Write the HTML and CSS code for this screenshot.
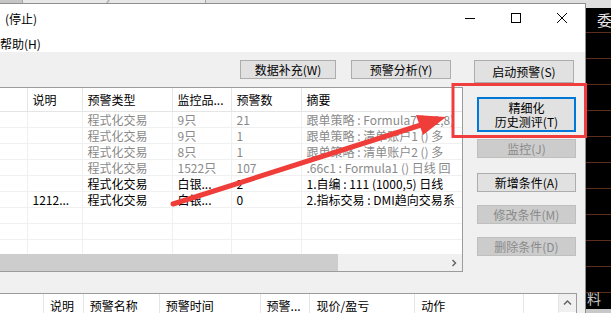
FILE: index.html
```html
<!DOCTYPE html>
<html lang="zh-CN">
<head>
    <meta charset="UTF-8">
    <title>预警系统</title>
    <link rel="stylesheet" href="styles.css">
</head>
<body>
    <div class="desktop">
        <!-- Application behind the dialog -->
        <div class="backdrop">
            <div class="bg-strip">
                <span class="bg-seg bg-seg-dark"></span>
                <span class="bg-seg bg-seg-mid"></span>
                <span class="bg-seg bg-seg-light"></span>
            </div>
            <div class="bg-body">
                <div class="bg-hidden"></div>
                <div class="quote">
                    <div class="quote-top">委</div>
                    <div class="quote-bottom">料</div>
                    <div class="quote-foot"></div>
                </div>
            </div>
        </div>

        <!-- The dialog window -->
        <div class="window">
            <div class="titlebar">
                <span class="title">(停止)</span>
                <div class="controls">
                    <span class="ctl"><svg width="12" height="12" viewBox="0 0 12 12"><path d="M1 6.5h10" stroke="#000" stroke-width="1"/></svg></span>
                    <span class="ctl"><svg width="12" height="12" viewBox="0 0 12 12"><rect x="1.5" y="1.5" width="9" height="9" fill="none" stroke="#000" stroke-width="1"/></svg></span>
                    <span class="ctl"><svg width="12" height="12" viewBox="0 0 12 12"><path d="M1 1l10 10M11 1L1 11" stroke="#000" stroke-width="1"/></svg></span>
                </div>
            </div>
            <div class="menubar"><span class="menu-item">帮助(H)</span></div>

            <div class="client">
                <div class="upper">
                    <div class="left-pane">
                        <div class="toolbar">
                            <button class="btn btn-data">数据补充(W)</button>
                            <button class="btn btn-analysis">预警分析(Y)</button>
                        </div>
                        <div class="grid-box">
                            <div class="grid-scroll">
                                <table class="grid">
                                    <colgroup>
                                        <col style="width:27px"><col style="width:55px"><col style="width:90px">
                                        <col style="width:59px"><col style="width:70px"><col style="width:200px">
                                    </colgroup>
                                    <thead>
                                        <tr><th></th><th>说明</th><th>预警类型</th><th>监控品...</th><th>预警数</th><th>摘要</th></tr>
                                    </thead>
                                    <tbody>
                                        <tr class="off"><td></td><td></td><td>程式化交易</td><td>9只</td><td>21</td><td>跟单策略 : Formula7 (1,1,8)</td></tr>
                                        <tr class="off"><td></td><td></td><td>程式化交易</td><td>9只</td><td>1</td><td>跟单策略 : 清单账户1 () 多</td></tr>
                                        <tr class="off"><td></td><td></td><td>程式化交易</td><td>8只</td><td>1</td><td>跟单策略 : 清单账户2 () 多</td></tr>
                                        <tr class="off"><td></td><td></td><td>程式化交易</td><td>1522只</td><td>107</td><td>.66c1 : Formula1 () 日线 回</td></tr>
                                        <tr><td></td><td></td><td>程式化交易</td><td>白银...</td><td>2</td><td>1.自编 : 111 (1000,5) 日线</td></tr>
                                        <tr><td></td><td>1212...</td><td>程式化交易</td><td>白银...</td><td>0</td><td>2.指标交易 : DMI趋向交易系</td></tr>
                                        <tr><td></td><td></td><td></td><td></td><td></td><td></td></tr>
                                        <tr><td></td><td></td><td></td><td></td><td></td><td></td></tr>
                                        <tr><td></td><td></td><td></td><td></td><td></td><td></td></tr>
                                    </tbody>
                                </table>
                            </div>
                            <div class="hscroll">
                                <div class="hthumb"></div>
                                <span class="scroll-btn">
                                    <svg width="8" height="8" viewBox="0 0 8 8"><path d="M2.5 1l3 3-3 3" fill="none" stroke="#606060" stroke-width="1.4"/></svg>
                                </span>
                            </div>
                        </div>
                    </div>

                    <div class="side-pane">
                        <button class="btn btn-start">启动预警(S)</button>
                        <button class="btn btn-side btn-refine">精细化<br>历史测评(T)</button>
                        <button class="btn btn-side btn-off btn-monitor">监控(J)</button>
                        <button class="btn btn-side btn-add">新增条件(A)</button>
                        <button class="btn btn-side btn-off btn-edit">修改条件(M)</button>
                        <button class="btn btn-side btn-off btn-delete">删除条件(D)</button>
                    </div>
                </div>

                <div class="lower">
                    <div class="lower-head">
                        <span class="lh lh-blank"></span>
                        <span class="lh lh-note">说明</span>
                        <span class="lh lh-name">预警名称</span>
                        <span class="lh lh-time">预警时间</span>
                        <span class="lh lh-alert">预警...</span>
                        <span class="lh lh-price">现价/盈亏</span>
                        <span class="lh lh-action">动作</span>
                        <span class="lh lh-rest"></span>
                        <span class="vscroll-btn">
                            <svg width="9" height="8" viewBox="0 0 9 8"><path d="M1 5.5l3.5-3.5 3.5 3.5" fill="none" stroke="#606060" stroke-width="1.4"/></svg>
                        </span>
                    </div>
                </div>
            </div>
        </div>

        <!-- Red annotation drawn over the screenshot -->
        <svg class="annot" width="611" height="313" viewBox="0 0 611 313">
            <rect x="453" y="84.5" width="132.5" height="52" fill="none" stroke="#f03e3e" stroke-width="3"/>
            <path d="M173 204L421 125" stroke="#ef3d3a" stroke-width="5" stroke-linecap="round"/>
            <polygon points="446,117 416,115 423,135" fill="#ef3d3a"/>
        </svg>
    </div>
</body>
</html>
```

FILE: styles.css
```css
/* General Reset */
html, body {
    margin: 0;
    padding: 0;
    width: 611px;
    height: 313px;
    overflow: hidden;
    font-family: "Noto Sans CJK SC", "Noto Sans", sans-serif;
    font-size: 12px;
    color: #000000;
}

/* Desktop holding the background app and the dialog */
.desktop {
    position: relative;
    width: 611px;
    height: 313px;
    background: #000000;
}

.backdrop {
    display: flex;
    flex-direction: column;
    height: 100%;
}

.bg-strip {
    display: flex;
    height: 8px;
    background: #e4e4e4;
}

.bg-seg {
    height: 100%;
    border-right: 1px solid #a8a8a8;
}

.bg-seg-dark {
    width: 22px;
    background: #c6c6c6;
}

.bg-seg-mid {
    width: 182px;
    background: linear-gradient(120deg, #e8e8e8 45%, #b0b0b0 46%, #e8e8e8 47%);
}

.bg-seg-light {
    flex: 1;
    border-right: none;
    background: #dedede;
}

.bg-body {
    flex: 1;
    display: flex;
}

.bg-hidden {
    width: 586px;
}

/* Quote panel on the right, behind the dialog */
.quote {
    flex: 1;
    display: flex;
    flex-direction: column;
    overflow: hidden;
    background-color: #000000;
    background-image: repeating-linear-gradient(to bottom, transparent 0, transparent 24px, #5e2c1d 24px, #5e2c1d 25px, transparent 25px, transparent 26px);
}

.quote-top {
    margin-top: 3px;
    padding-left: 11px;
    font-size: 15px;
    line-height: 18px;
    color: #e6e6e6;
    white-space: nowrap;
}

.quote-bottom {
    margin-top: auto;
    padding-left: 1px;
    font-size: 14px;
    line-height: 16px;
    color: #c8c8c8;
}

.quote-foot {
    height: 4px;
    margin-top: 3px;
    background: #c8c8c8;
}

/* Dialog window */
.window {
    position: absolute;
    left: 0;
    top: 3px;
    width: 586px;
    height: 310px;
    box-sizing: border-box;
    border-top: 1px solid #8e8e8e;
    border-right: 1px solid #8e8e8e;
    background: #f0f0f0;
    display: flex;
    flex-direction: column;
    overflow: hidden;
}

.titlebar {
    display: flex;
    flex-shrink: 0;
    align-items: center;
    height: 28px;
    background: #ffffff;
}

.title {
    padding-left: 5px;
    line-height: 14px;
    padding-top: 1px;
}

.controls {
    display: flex;
    margin-left: auto;
    height: 100%;
}

.ctl {
    display: flex;
    width: 46px;
    align-items: center;
    justify-content: center;
}

.menubar {
    display: flex;
    flex-shrink: 0;
    align-items: center;
    height: 20px;
    background: #ffffff;
}

.menu-item {
    padding-top: 2px;
}

.client {
    flex: 1;
    display: flex;
    flex-direction: column;
}

.upper {
    display: flex;
    flex-shrink: 0;
    height: 241px;
}

/* Left pane: toolbar + list */
.left-pane {
    width: 463px;
    padding-top: 8px;
    display: flex;
    flex-direction: column;
}

.toolbar {
    display: flex;
    justify-content: flex-end;
    gap: 15px;
    padding-right: 12px;
}

/* Buttons */
.btn {
    height: 19px;
    padding: 0;
    font-family: "Noto Sans CJK SC", sans-serif;
    font-size: 12px;
    line-height: 17px;
    color: #000000;
    background: #e1e1e1;
    border: 1px solid #adadad;
    box-sizing: border-box;
}

.btn-data {
    width: 96px;
}

.btn-analysis {
    width: 100px;
}

.btn-off {
    background: #cccccc;
    border-color: #bfbfbf;
    color: #8a8a8a;
}

.grid-box {
    margin-top: 8px;
    height: 185px;
    box-sizing: border-box;
    border: 1px solid #9c9c9c;
    border-left: none;
    background: #ffffff;
    display: flex;
    flex-direction: column;
}

.grid-scroll {
    flex: 1;
    overflow: hidden;
}

.grid {
    border-collapse: collapse;
    table-layout: fixed;
    width: 501px;
}

.grid th {
    height: 23px;
    padding: 0 0 0 5px;
    font-weight: normal;
    text-align: left;
    border-right: 1px solid #e5e5e5;
    border-bottom: 1px solid #e5e5e5;
    white-space: nowrap;
    overflow: hidden;
}

.grid td {
    height: 15px;
    padding: 0 0 0 5px;
    line-height: 15px;
    border-right: 1px solid #f0f0f0;
    border-bottom: 1px solid #f0f0f0;
    white-space: nowrap;
    overflow: hidden;
}

.grid tr.off td {
    color: #8a8a8a;
}

.hscroll {
    display: flex;
    height: 17px;
    background: #f0f0f0;
}

.hthumb {
    width: 338px;
    background: #cdcdcd;
}

.scroll-btn {
    display: flex;
    width: 17px;
    margin-left: auto;
    align-items: center;
    justify-content: center;
}

/* Right pane: buttons */
.side-pane {
    flex: 1;
    display: flex;
    flex-direction: column;
    align-items: flex-start;
    padding-top: 8px;
}

.btn-start {
    width: 100px;
    height: 23px;
    margin-left: 11px;
    line-height: 21px;
}

.btn-side {
    width: 99px;
    margin-left: 14px;
}

.btn-refine {
    height: 35px;
    margin-top: 14px;
    line-height: 14px;
    border: 2px solid #0078d7;
}

.btn-monitor {
    margin-top: 7px;
}

.btn-add {
    margin-top: 15px;
}

.btn-edit {
    margin-top: 13px;
}

.btn-delete {
    margin-top: 13px;
}

/* Lower list */
.lower {
    flex: 1;
    width: 577px;
    box-sizing: border-box;
    border-top: 1px solid #9c9c9c;
    border-right: 1px solid #9c9c9c;
    background: #ffffff;
    overflow: hidden;
}

.lower-head {
    display: flex;
    height: 24px;
}

.lh {
    box-sizing: border-box;
    padding-left: 6px;
    line-height: 24px;
    border-right: 1px solid #e5e5e5;
    white-space: nowrap;
}

.lh-blank { width: 44px; }
.lh-note { width: 40px; }
.lh-name { width: 76px; }
.lh-time { width: 101px; }
.lh-alert { width: 50px; }
.lh-price { width: 105px; }
.lh-action { width: 109px; }
.lh-rest { width: 35px; }

.vscroll-btn {
    display: flex;
    width: 17px;
    height: 18px;
    align-items: center;
    justify-content: center;
    background: #f0f0f0;
}

/* Annotation overlay */
.annot {
    position: absolute;
    left: 0;
    top: 0;
    pointer-events: none;
}
```
